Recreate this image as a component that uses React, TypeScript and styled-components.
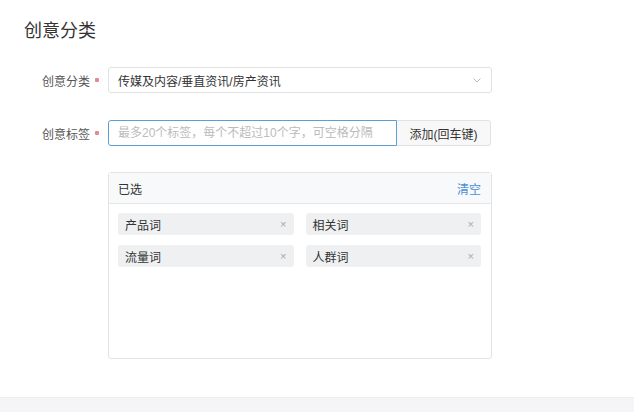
import React from "react";
import styled, { createGlobalStyle } from "styled-components";

const Global = createGlobalStyle`
  html, body { margin: 0; padding: 0; background: #fff; }
  body { font-family: "Liberation Sans", "Noto Sans CJK SC", sans-serif; color: #333; }
  * { box-sizing: border-box; }
`;

const Page = styled.div`
  min-height: 412px;
  display: flex;
  flex-direction: column;
`;

const Content = styled.div`
  padding: 19px 0 0 0;
  display: flex;
  flex-direction: column;
`;

const Title = styled.h1`
  margin: 0 0 0 24px;
  font-size: 18px;
  line-height: 24px;
  font-weight: normal;
  color: #333;
`;

const Row = styled.div<{ $top: number }>`
  display: flex;
  align-items: center;
  margin-top: ${(p) => p.$top}px;
  height: 26px;
`;

const LabelCell = styled.div`
  width: 108px;
  padding-right: 9px;
  display: flex;
  justify-content: flex-end;
  align-items: center;
  font-size: 12px;
  color: #555;
`;

const Star = styled.span`
  width: 4px;
  height: 4px;
  border-radius: 1px;
  background: #e58a8f;
  margin-left: 5px;
`;

const Select = styled.div`
  width: 384px;
  height: 26px;
  border: 1px solid #e2e2e2;
  border-radius: 3px;
  display: flex;
  align-items: center;
  justify-content: space-between;
  padding: 0 10px 0 9px;
  font-size: 12px;
  color: #333;
`;

const Input = styled.input`
  width: 289px;
  height: 26px;
  border: 1px solid #5d9fd3;
  border-radius: 3px 0 0 3px;
  padding: 0 9px;
  font-size: 12px;
  font-family: inherit;
  color: #333;
  outline: none;
  &::placeholder { color: #bbb; }
`;

const AddButton = styled.button`
  width: 94px;
  height: 26px;
  border: 1px solid #e2e2e2;
  border-left: none;
  border-radius: 0 3px 3px 0;
  background: #f8f8f8;
  font-family: inherit;
  font-size: 12px;
  color: #333;
  padding: 0;
`;

const Panel = styled.div`
  margin: 26px 0 0 108px;
  width: 384px;
  height: 187px;
  border: 1px solid #e3e3e3;
  border-radius: 3px;
  display: flex;
  flex-direction: column;
`;

const PanelHeader = styled.div`
  height: 31px;
  background: #f8f9fa;
  border-bottom: 1px solid #e6e6e6;
  display: flex;
  align-items: center;
  justify-content: space-between;
  padding: 0 10px 0 9px;
  font-size: 12px;
  color: #333;
`;

const ClearLink = styled.span`
  color: #4a8fd6;
  cursor: pointer;
`;

const TagGrid = styled.div`
  display: grid;
  grid-template-columns: 1fr 1fr;
  column-gap: 12px;
  row-gap: 10px;
  padding: 9px 10px 0 9px;
`;

const Tag = styled.div`
  height: 22px;
  background: #eef0f2;
  border-radius: 3px;
  display: flex;
  align-items: center;
  justify-content: space-between;
  padding: 0 7px 0 7px;
  font-size: 12px;
  color: #333;
`;

const Close = styled.span`
  color: #aaa;
  font-size: 11px;
`;

const Footer = styled.div`
  margin-top: auto;
  height: 15px;
  background: #f5f5f7;
  border-top: 1px solid #efeff1;
`;

const Chevron = () => (
  <svg width="8" height="5" viewBox="0 0 8 5" fill="none">
    <path d="M0.5 0.5 L4 4 L7.5 0.5" stroke="#bbb" strokeWidth="1" />
  </svg>
);

const tags = ["产品词", "相关词", "流量词", "人群词"];

export default function App() {
  return (
    <Page>
      <Global />
      <Content>
        <Title>创意分类</Title>
        <Row $top={24}>
          <LabelCell>
            创意分类<Star />
          </LabelCell>
          <Select>
            <span>传媒及内容/垂直资讯/房产资讯</span>
            <Chevron />
          </Select>
        </Row>
        <Row $top={27}>
          <LabelCell>
            创意标签<Star />
          </LabelCell>
          <Input placeholder="最多20个标签，每个不超过10个字，可空格分隔" />
          <AddButton>添加(回车键)</AddButton>
        </Row>
        <Panel>
          <PanelHeader>
            <span>已选</span>
            <ClearLink>清空</ClearLink>
          </PanelHeader>
          <TagGrid>
            {tags.map((t) => (
              <Tag key={t}>
                <span>{t}</span>
                <Close>×</Close>
              </Tag>
            ))}
          </TagGrid>
        </Panel>
      </Content>
      <Footer />
    </Page>
  );
}
